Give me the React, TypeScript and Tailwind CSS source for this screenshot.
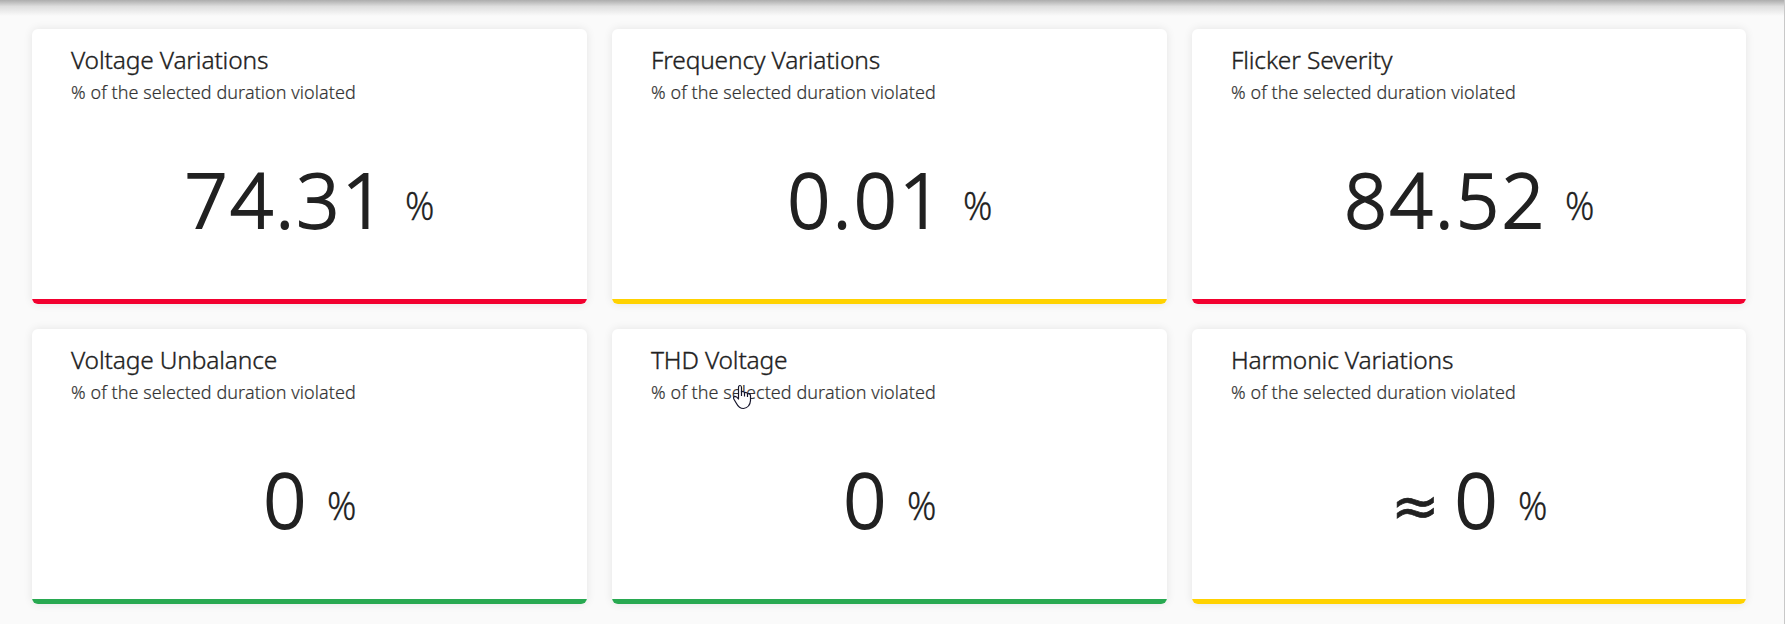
const cards = [
  { title: "Voltage Variations", value: "74.31", bar: "bg-[#f2002f]" },
  { title: "Frequency Variations", value: "0.01", bar: "bg-[#ffd200]" },
  { title: "Flicker Severity", value: "84.52", bar: "bg-[#f2002f]" },
  { title: "Voltage Unbalance", value: "0", bar: "bg-[#28a951]" },
  { title: "THD Voltage", value: "0", bar: "bg-[#28a951]" },
  { title: "Harmonic Variations", value: "0", approx: true, bar: "bg-[#ffd200]" },
];

function HandCursor() {
  return (
    <svg className="absolute top-[384px] left-[732px] h-[26px] w-[20px]" viewBox="0 0 20 26" fill="none">
      <path
        d="M6.5 15V3.5Q6.5 1.5 8 1.5T9.5 3.5V8Q11.5 6.5 12.5 9Q14.5 7.5 15.5 10Q18 9 18.5 11.5V16.5Q18 23.5 11.5 24.5Q7 24.5 4.5 19.5L1.8 15Q1 12.5 3 12.3Q4.5 12.3 6.5 15Z"
        fill="white"
        stroke="#15152b"
        strokeWidth="1.2"
        strokeLinejoin="round"
      />
      <path d="M9.5 7V12M12.5 8.5V12.5M15.5 10V13" stroke="#15152b" strokeWidth="1.2" />
    </svg>
  );
}

export default function App() {
  return (
    <main className="relative h-[624px] overflow-hidden border-r border-[#c8c8c8] bg-[#fafafa] font-['Noto_Sans',sans-serif] text-[#212121]">
      <div className="h-4 bg-linear-to-b from-[#adadad] via-[#dedede] via-40% to-[#fafafa]" />
      <div className="grid grid-cols-[555px_555px_554px] gap-[25px] pt-[13px] pl-8">
        {cards.map((c) => (
          <section
            key={c.title}
            className="flex h-[275px] flex-col overflow-hidden rounded-[6px] bg-white pt-[15px] shadow-[0_0_10px_rgba(0,0,0,0.09)]"
          >
            <h2 className="px-[39px] text-[24.5px] leading-8 font-light tracking-[-0.15px] [-webkit-text-stroke:0.35px_#212121]">
              {c.title}
            </h2>
            <p className="px-[39px] text-[18px] leading-8 font-light tracking-[0.07px] text-[#333] [-webkit-text-stroke:0.2px_#333]">
              % of the selected duration violated
            </p>
            <div className="flex flex-1 items-baseline justify-center pt-[36px] pl-[2px] leading-[110px]">
              {c.approx && (
                <span className="relative -top-[2px] mr-[15px] font-['DejaVu_Sans'] text-[58px] leading-none [-webkit-text-stroke:0.7px_#212121]">
                  ≈
                </span>
              )}
              <span className="text-[75.5px] font-light tracking-[2.4px] [-webkit-text-stroke:1.8px_#212121]">{c.value}</span>
              <span className="relative -top-2 ml-[18px] w-[31px] text-[39px] font-light [-webkit-text-stroke:0.3px_#212121]">
                <span className="inline-block origin-left scale-x-[0.93]">%</span>
              </span>
            </div>
            <div className={`h-[5px] shrink-0 ${c.bar}`} />
          </section>
        ))}
      </div>
      <HandCursor />
    </main>
  );
}
